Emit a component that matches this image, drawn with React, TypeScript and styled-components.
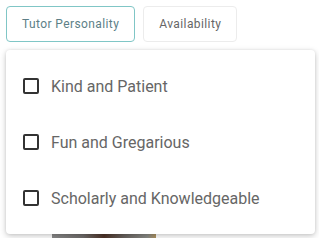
import styled, { createGlobalStyle } from "styled-components";

const GlobalStyle = createGlobalStyle`
  html, body {
    margin: 0;
    padding: 0;
    background: #ffffff;
    font-family: Roboto, "Liberation Sans", sans-serif;
    overflow: hidden;
  }
`;

interface TabBtnProps {
  active?: boolean;
}

const Page = styled.div`
  position: relative;
  width: 319px;
  height: 238px;
  overflow: hidden;
`;

const Toolbar = styled.div`
  display: flex;
  gap: 8px;
  padding: 6px 6px 0;
`;

const TabBtn = styled.button<TabBtnProps>`
  height: 36px;
  padding: 0 15px;
  border-radius: 4px;
  background: #ffffff;
  border: 1px solid ${(p) => (p.active ? "#80c6c6" : "#ececec")};
  color: ${(p) => (p.active ? "#5d7f87" : "#666666")};
  font-family: Roboto, "Liberation Sans", sans-serif;
  font-size: 12px;
  letter-spacing: 0.4px;
`;

const Content = styled.div`
  display: flex;
  padding: 24px 0 0 52px;
`;

const Photo = styled.div`
  width: 104px;
  height: 200px;
  background: linear-gradient(
    90deg,
    #8a8a8a 0%,
    #6f6c6a 30%,
    #4e3328 50%,
    #6a6460 70%,
    #8b8c88 92%,
    #b09460 100%
  );
`;

const Menu = styled.div`
  position: absolute;
  left: 6px;
  top: 50px;
  width: 309px;
  padding: 8px 0;
  background: #ffffff;
  border-radius: 4px;
  box-shadow: 0 2px 6px rgba(0, 0, 0, 0.22), 0 0 3px rgba(0, 0, 0, 0.08);
`;

const Option = styled.label`
  display: flex;
  align-items: center;
  gap: 12px;
  height: 56px;
  padding: 0 17px;
  color: #666666;
  font-size: 16px;
  font-weight: 400;
`;

const Box = styled.span`
  width: 12px;
  height: 12px;
  border: 2px solid #333333;
  border-radius: 2px;
  flex-shrink: 0;
`;

const options = [
  "Kind and Patient",
  "Fun and Gregarious",
  "Scholarly and Knowledgeable",
];

export default function App() {
  return (
    <Page>
      <GlobalStyle />
      <Toolbar>
        <TabBtn active>Tutor Personality</TabBtn>
        <TabBtn>Availability</TabBtn>
      </Toolbar>
      <Content>
        <Photo />
      </Content>
      <Menu>
        {options.map((o) => (
          <Option key={o}>
            <Box />
            {o}
          </Option>
        ))}
      </Menu>
    </Page>
  );
}
